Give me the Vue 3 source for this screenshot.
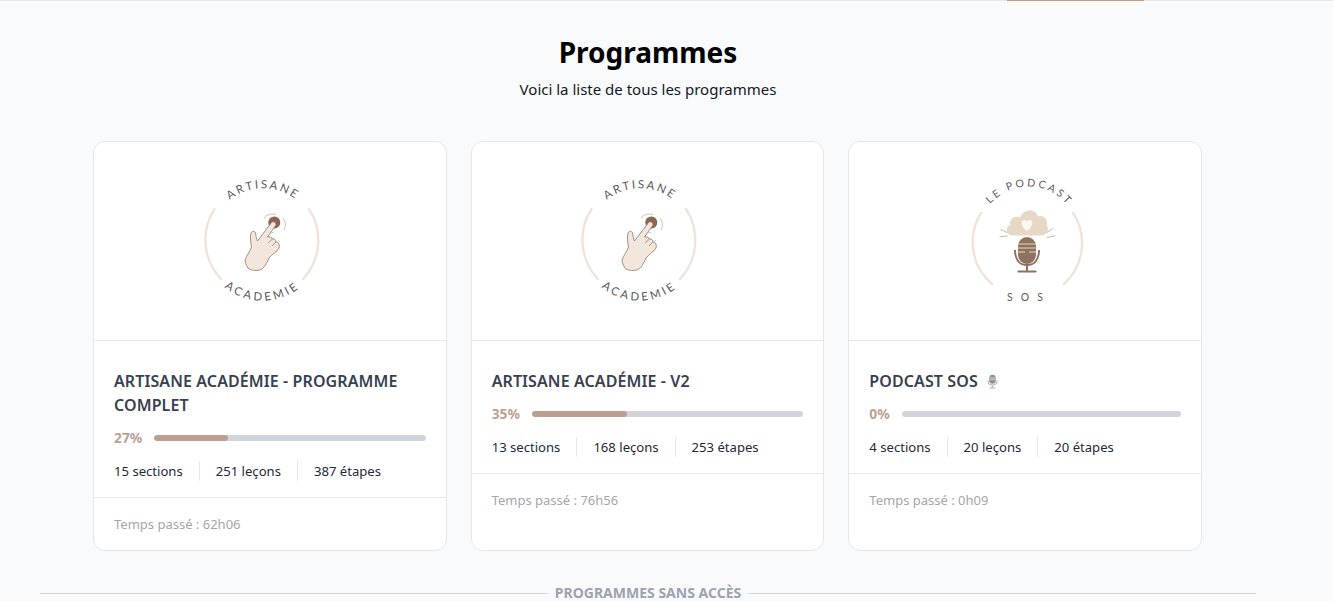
<script setup>
const cards = [
  { id: 1, kind: 'hand', title: 'ARTISANE ACADÉMIE - PROGRAMME COMPLET', pct: 27, stats: ['15 sections', '251 leçons', '387 étapes'], time: '62h06' },
  { id: 2, kind: 'hand', title: 'ARTISANE ACADÉMIE - V2', pct: 35, stats: ['13 sections', '168 leçons', '253 étapes'], time: '76h56' },
  { id: 3, kind: 'mic', title: 'PODCAST SOS', pct: 0, stats: ['4 sections', '20 leçons', '20 étapes'], time: '0h09' }
]
</script>

<template>
  <div class="page">
    <div class="topbar"><div class="topbar-active"></div></div>
    <main class="main">
      <header class="head">
        <h1>Programmes</h1>
        <p>Voici la liste de tous les programmes</p>
      </header>

      <section class="grid">
        <article v-for="c in cards" :key="c.id" class="card">
          <div class="cover">
            <svg v-if="c.kind === 'hand'" class="logo" viewBox="190 161 160 160" aria-hidden="false">
              <defs>
                <path :id="'top' + c.id" d="M225 204 A54 54 0 0 1 301 204" fill="none" />
                <path :id="'bot' + c.id" d="M220 283 A60 60 0 0 0 305 283" fill="none" />
              </defs>
              <path d="M214.5 209 A57 57 0 0 0 221 279" class="ring" />
              <path d="M309 209 A57 57 0 0 1 303 279" class="ring" />
              <text class="arc-text tight"><textPath :href="'#top' + c.id" startOffset="50%" text-anchor="middle">ARTISANE</textPath></text>
              <text class="arc-text wide"><textPath :href="'#bot' + c.id" startOffset="50%" text-anchor="middle">ACADEMIE</textPath></text>
              <path d="M264 218 A12 12 0 0 1 276 214.5 M283 218 A11 11 0 0 1 284 230 M267 229 A11 11 0 0 0 274 233" class="ripple" />
              <circle cx="274.3" cy="222.5" r="6" fill="#8a6552" />
              <path class="hand" d="M271.5 222.5 C273 221 276 222 276 225 L267.5 237 C270 236.5 272 237.5 272.5 239 C274.5 238.5 276 240 276 242 C278.5 242 280 245 279 248 C277 252 272 254 269 258 C267 263 264 268 261 269.5 C258 271 251 271 248 268 C246 265 245 262 245 260 C247 255 250 251 251.5 247 C250.5 242 250 236 251 233 C252 230.5 255 231 255.5 233 C256 236 256.5 239 257.5 241 Z" />
              <path d="M272.5 239 L268 243 M276 242 L272 246" class="crease" />
            </svg>

            <svg v-else class="logo" viewBox="945 161 160 160">
              <defs>
                <path :id="'top' + c.id" d="M986 210 A50 50 0 0 1 1072 212" fill="none" />
              </defs>
              <path d="M981 213 A55 55 0 0 0 992 284" class="ring" />
              <path d="M1073 213 A55 55 0 0 1 1064 284" class="ring" />
              <text class="arc-text small"><textPath :href="'#top' + c.id" startOffset="50%" text-anchor="middle">LE PODCAST</textPath></text>
              <text class="arc-text small sos" x="1029" y="301" text-anchor="middle">SOS</text>
              <path d="M1013 235.5 C1006 235.5 1004.5 227 1010.5 225 C1008.5 218 1016 215 1020 217.5 C1023 208.5 1036 208.5 1038 216.5 C1043.5 214.5 1049 220 1046.5 225 C1050 229 1046.5 235.5 1041 235.5 Z" fill="#e7d7c5" />
              <path d="M1027 231 C1020.5 226.5 1020.5 220.5 1024 220 C1025.5 220 1026.5 220.5 1027 221.5 C1027.5 220.5 1029 220 1030 220 C1033.5 220.5 1033.5 226.5 1027 231 Z" fill="#fbf6ef" />
              <path d="M1001 229.5 L1007 232.5 M1000 236.7 L1007 236 M1052.7 228.5 L1047 232.3 M1055 236 L1047 237.5" class="rays" />
              <rect x="1018" y="237" width="18" height="27" rx="9" fill="#8f7160" />
              <path d="M1018 244 H1036 M1018 248 H1036 M1018 252 H1025 M1029 252 H1036" class="mic-lines" />
              <path d="M1015 250 C1015 260 1020 265 1027 265 C1034 265 1039 260 1039 250" fill="none" stroke="#8f7160" stroke-width="2" />
              <path d="M1027 265 V271" stroke="#8f7160" stroke-width="2" />
              <path d="M1018.5 271.5 H1035.5" stroke="#8f7160" stroke-width="2.2" stroke-linecap="round" />
            </svg>
          </div>

          <div class="body">
            <h2 class="title">
              {{ c.title }}
              <svg v-if="c.kind === 'mic'" class="emoji" viewBox="0 0 12 16">
                <rect x="2.5" y="0.5" width="7" height="10" rx="3.5" fill="#8d8f96" />
                <path d="M3 4 H9 M3 6 H9" stroke="#d9dadd" stroke-width="1" />
                <path d="M1 7 C1 11 3 12 6 12 C9 12 11 11 11 7 M6 12 V15 M3 15 H9" stroke="#b5b6ba" stroke-width="1.2" fill="none" />
              </svg>
            </h2>
            <div class="progress">
              <span class="pct">{{ c.pct }}%</span>
              <div class="track"><div class="fill" :style="{ width: c.pct + '%' }"></div></div>
            </div>
            <ul class="stats">
              <li v-for="s in c.stats" :key="s">{{ s }}</li>
            </ul>
          </div>

          <div class="foot">Temps passé : {{ c.time }}</div>
        </article>
      </section>

      <div class="divider"><span>PROGRAMMES SANS ACCÈS</span></div>
    </main>
  </div>
</template>

<style>
html, body { margin: 0; background: #f9fafb; overflow: hidden; }
</style>

<style scoped>
.page {
  height: 601px;
  overflow: hidden;
  background: #f9fafb;
  font-family: "Noto Sans", "Open Sans", sans-serif;
}
.topbar { height: 1px; background: #e5e7eb; }
.topbar-active { height: 1px; width: 137px; margin-left: 1007px; background: #c09a8b; }
.main { width: 1296px; }
.head { text-align: center; padding-top: 31px; }
h1 { margin: 0; font-size: 28px; line-height: 40px; font-weight: 700; color: #000; }
.head p { margin: 5px 0 0; font-size: 15px; line-height: 24px; color: #111827; }
.grid {
  display: grid;
  grid-template-columns: repeat(3, 1fr);
  gap: 24px;
  margin-top: 40px;
  padding: 0 94px 0 93px;
}
.card {
  display: flex;
  flex-direction: column;
  height: 410px;
  box-sizing: border-box;
  background: #fff;
  border: 1px solid #e5e7eb;
  border-radius: 12px;
}
.cover {
  height: 198px;
  display: flex;
  align-items: center;
  justify-content: center;
  border-bottom: 1px solid #e5e7eb;
}
.logo { width: 160px; height: 160px; display: block; }
.ring { fill: none; stroke: #f0e4da; stroke-width: 2.4; stroke-linecap: round; }
.arc-text { font-family: Lato, sans-serif; font-size: 11.5px; fill: #5a5a5c; }
.arc-text.tight { letter-spacing: 2.2px; }
.arc-text.wide { letter-spacing: 2.9px; }
.arc-text.small { font-size: 10.5px; letter-spacing: 2.6px; }
.arc-text.sos { letter-spacing: 8px; }
.ripple { fill: none; stroke: #b9a99f; stroke-width: 0.7; }
.hand { fill: #f3e6dc; stroke: #8a7669; stroke-width: 0.8; stroke-linejoin: round; }
.crease { fill: none; stroke: #8a7669; stroke-width: 0.7; }
.rays { stroke: #cdb8a3; stroke-width: 1; stroke-linecap: round; }
.mic-lines { stroke: #e7d7c5; stroke-width: 1; }
.body { padding: 28px 20px 16px; border-bottom: 1px solid #e5e7eb; }
.title {
  margin: 0;
  font-size: 16px;
  line-height: 24px;
  font-weight: 600;
  letter-spacing: 0.1px;
  color: #374151;
}
.emoji { width: 11px; height: 15px; margin-left: 5px; vertical-align: -2px; }
.progress { display: flex; align-items: center; gap: 12px; margin-top: 12px; height: 18px; }
.pct { font-size: 13.8px; font-weight: 700; color: #c09f93; line-height: 18px; }
.track { flex: 1; height: 6px; border-radius: 3px; background: #d1d5db; overflow: hidden; }
.fill { height: 100%; background: #bf9e92; border-radius: 3px; }
.stats { list-style: none; margin: 14px 0 0; padding: 0; display: flex; }
.stats li {
  font-size: 13.1px;
  line-height: 20px;
  color: #1f2937;
  padding: 0 16px;
  border-left: 1px solid #e5e7eb;
}
.stats li:first-child { padding-left: 0; border-left: 0; }
.foot {
  flex: 1;
  padding: 16px 20px;
  font-size: 13px;
  line-height: 20px;
  color: #a8a4aa;
}
.divider {
  display: flex;
  align-items: center;
  gap: 7px;
  margin-top: 32px;
  padding: 0 40px;
  font-size: 14px;
  line-height: 20px;
  font-weight: 700;
  color: #9ca3af;
}
.divider::before, .divider::after { content: ""; flex: 1; height: 1px; background: #d1d5db; }
</style>
